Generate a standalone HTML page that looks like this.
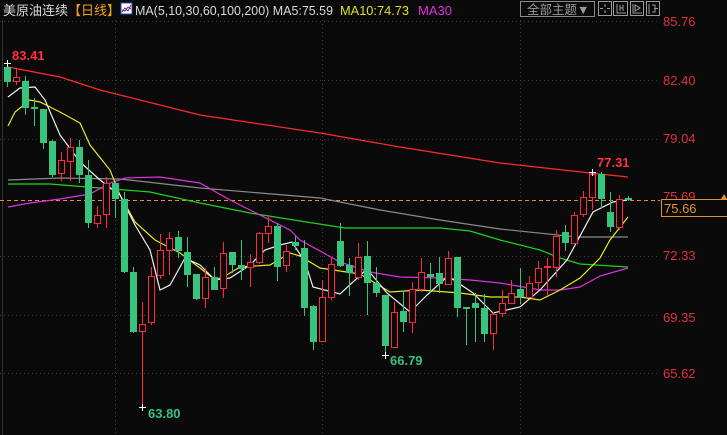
<!DOCTYPE html>
<html><head><meta charset="utf-8"><style>
html,body{margin:0;padding:0;background:#0a0a0a;width:727px;height:435px;overflow:hidden}
svg{display:block}
text{font-family:"Liberation Sans","Noto Sans CJK SC",sans-serif}
</style></head><body>
<svg width="727" height="435" viewBox="0 0 727 435" xmlns="http://www.w3.org/2000/svg">
<rect width="727" height="435" fill="#0a0a0a"/>
<!-- header -->
<text x="3" y="15" font-size="13" fill="#d8d8d8">美原油连续</text>
<text x="68" y="15" font-size="13" fill="#f0a020">【日线】</text>
<rect x="121" y="3" width="11" height="11" fill="#fff" stroke="#2050c0"/>
<polyline points="122,12 125,8 128,11 131,5" fill="none" stroke="#d02020" stroke-width="1"/>
<polyline points="122,10 125,11 128,7 131,9" fill="none" stroke="#2040c0" stroke-width="1"/>
<text x="135" y="15" font-size="13" fill="#d8d8d8" textLength="198" lengthAdjust="spacingAndGlyphs">MA(5,10,30,60,100,200) MA5:75.59</text>
<text x="340" y="15" font-size="13" fill="#e0e020" textLength="69" lengthAdjust="spacingAndGlyphs">MA10:74.73</text>
<text x="418" y="15" font-size="13" fill="#e030e0">MA30</text>
<rect x="520.5" y="1.5" width="74" height="15" fill="none" stroke="#8a8a8a"/>
<text x="527" y="14" font-size="12.5" fill="#9a9a9a">全部主题▼</text>
<g fill="none" stroke="#9a9a9a">
<rect x="598.5" y="1.5" width="13" height="14"/><rect x="613.5" y="1.5" width="14" height="14"/>
<rect x="630.5" y="1.5" width="13" height="14"/><rect x="646.5" y="1.5" width="13" height="14"/>
<path d="M605 4v3M605 10v3M600 8.5h3M607 8.5h3"/>
<path d="M617 4v9h9M620 5v6M623 5v6M620 8h3"/>
<path d="M633 4v9h9M635 5v6l5-3z"/>
<path d="M649 4v10M652 5h3v7h-3M654 8.5h4"/>
</g>
<!-- grid -->
<g stroke="#3a3a3a" stroke-dasharray="1,3">
<path d="M0 21.5H660M0 80.5H660M0 139.5H660M0 256.5H660M0 315.5H660M0 373.5H660"/>
<path d="M115.5 20V435M322.5 20V435M520.5 20V435"/>
</g>
<line x1="2.5" y1="20" x2="2.5" y2="435" stroke="#333"/>
<line x1="0" y1="200.5" x2="660" y2="200.5" stroke="#e09030" stroke-dasharray="4,3"/>
<!-- axis labels -->
<g font-size="13" fill="#e03040">
<text x="663" y="26">85.76</text><text x="663" y="85">82.40</text><text x="663" y="143">79.04</text>
<text x="663" y="201">75.69</text><text x="663" y="260">72.33</text><text x="663" y="322">69.35</text><text x="663" y="378">65.62</text>
</g>
<rect x="661.5" y="199.5" width="66" height="17" fill="#0a0a0a" stroke="#e09030"/>
<text x="664" y="213" font-size="13" fill="#e09030">75.66</text>
<path d="M721 199l3-5 3 5z" fill="#e09030"/>
<!-- MAs -->
<g fill="none" stroke-width="1.2">
<polyline stroke="#ff2a2a" points="8,67 60,77 100,90 200,115 320,133 400,147 500,163 590,173 628,177"/>
<polyline stroke="#8a8a8a" points="8,180 60,178 120,179 200,188 320,198 380,210 440,220 500,229 577,237 628,237"/>
<polyline stroke="#20d020" points="8,184 50,184 100,188 150,192 200,203 250,213 300,221 345,228 440,228 470,231 500,240 540,250 560,258 580,264 628,267"/>
<polyline stroke="#e030e0" points="8,207 30,203 60,199 90,194 110,183 125,178 160,177 200,183 230,200 260,215 290,230 300,240 340,262 370,272 400,277 440,278 470,280 500,283 540,290 560,290 580,287 600,276 628,268"/>
<polyline stroke="#e8e820" points="8,126 15,112 30,100 40,102 60,112 80,123 90,145 110,170 120,195 135,222 155,240 180,253 200,268 215,280 225,276 240,267 270,265 290,253 300,256 320,268 360,274 390,292 420,290 460,293 490,297 520,297 540,300 560,290 580,278 600,258 610,240 628,217"/>
<polyline stroke="#f0f0f0" points="8,97 20,88 35,87 45,100 60,135 80,162 100,180 120,195 135,225 150,250 160,290 170,285 185,258 200,265 215,280 230,278 250,265 265,250 280,245 292,242 305,262 313,287 340,294 367,269 387,293 410,312 427,295 448,276 473,293 493,313 520,307 540,290 567,260 593,212 613,202 627,200"/>
</g>
<!-- candles -->
<g id="c" stroke-width="1">
<g stroke="#38c47c" fill="#38c47c">
<line x1="7.5" y1="63" x2="7.5" y2="87"/><rect x="4" y="67" width="7" height="15" stroke="none"/>
<line x1="25.5" y1="76" x2="25.5" y2="115"/><rect x="22" y="81" width="7" height="27" stroke="none"/>
<line x1="34.5" y1="98" x2="34.5" y2="126"/><rect x="31" y="107" width="7" height="2" stroke="none"/>
<line x1="43.5" y1="109" x2="43.5" y2="149"/><rect x="40" y="109" width="7" height="34" stroke="none"/>
<line x1="52.5" y1="140" x2="52.5" y2="177"/><rect x="49" y="141" width="7" height="34" stroke="none"/>
<line x1="79.5" y1="140" x2="79.5" y2="183"/><rect x="76" y="147" width="7" height="28" stroke="none"/>
<line x1="88.5" y1="160" x2="88.5" y2="228"/><rect x="85" y="175" width="7" height="48" stroke="none"/>
<line x1="115.5" y1="182" x2="115.5" y2="218"/><rect x="112" y="183" width="7" height="16" stroke="none"/>
<line x1="124.5" y1="192" x2="124.5" y2="273"/><rect x="121" y="199" width="7" height="73" stroke="none"/>
<line x1="133.5" y1="267" x2="133.5" y2="333"/><rect x="130" y="272" width="7" height="60" stroke="none"/>
<line x1="178.5" y1="231" x2="178.5" y2="258"/><rect x="175" y="237" width="7" height="14" stroke="none"/>
<line x1="187.5" y1="237" x2="187.5" y2="287"/><rect x="184" y="252" width="7" height="23" stroke="none"/>
<line x1="196.5" y1="274" x2="196.5" y2="300"/><rect x="193" y="274" width="7" height="25" stroke="none"/>
<line x1="214.5" y1="267" x2="214.5" y2="290"/><rect x="211" y="277" width="7" height="13" stroke="none"/>
<line x1="232.5" y1="252" x2="232.5" y2="273"/><rect x="229" y="252" width="7" height="13" stroke="none"/>
<line x1="241.5" y1="240" x2="241.5" y2="280"/><rect x="238" y="265" width="7" height="4" stroke="none"/>
<line x1="277.5" y1="223" x2="277.5" y2="281"/><rect x="274" y="226" width="7" height="41" stroke="none"/>
<line x1="295.5" y1="236" x2="295.5" y2="250"/><rect x="292" y="242" width="7" height="4" stroke="none"/>
<line x1="304.5" y1="240" x2="304.5" y2="316"/><rect x="301" y="248" width="7" height="60" stroke="none"/>
<line x1="313.5" y1="305" x2="313.5" y2="350"/><rect x="310" y="306" width="7" height="36" stroke="none"/>
<line x1="340.5" y1="223" x2="340.5" y2="267"/><rect x="337" y="241" width="7" height="25" stroke="none"/>
<line x1="349.5" y1="258" x2="349.5" y2="296"/><rect x="346" y="265" width="7" height="8" stroke="none"/>
<line x1="367.5" y1="241" x2="367.5" y2="315"/><rect x="364" y="256" width="7" height="27" stroke="none"/>
<line x1="376.5" y1="267" x2="376.5" y2="297"/><rect x="373" y="283" width="7" height="10" stroke="none"/>
<line x1="385.5" y1="295" x2="385.5" y2="355"/><rect x="382" y="295" width="7" height="51" stroke="none"/>
<line x1="403.5" y1="291" x2="403.5" y2="332"/><rect x="400" y="311" width="7" height="11" stroke="none"/>
<line x1="430.5" y1="263" x2="430.5" y2="293"/><rect x="427" y="274" width="7" height="3" stroke="none"/>
<line x1="439.5" y1="257" x2="439.5" y2="293"/><rect x="436" y="273" width="7" height="11" stroke="none"/>
<line x1="457.5" y1="257" x2="457.5" y2="317"/><rect x="454" y="257" width="7" height="51" stroke="none"/>
<line x1="466.5" y1="307" x2="466.5" y2="345"/><rect x="463" y="307" width="7" height="2" stroke="none"/>
<line x1="475.5" y1="293" x2="475.5" y2="342"/><rect x="472" y="303" width="7" height="5" stroke="none"/>
<line x1="484.5" y1="294" x2="484.5" y2="342"/><rect x="481" y="308" width="7" height="26" stroke="none"/>
<line x1="520.5" y1="268" x2="520.5" y2="304"/><rect x="517" y="289" width="7" height="8" stroke="none"/>
<line x1="565.5" y1="225" x2="565.5" y2="251"/><rect x="562" y="232" width="7" height="11" stroke="none"/>
<line x1="601.5" y1="172" x2="601.5" y2="208"/><rect x="598" y="174" width="7" height="25" stroke="none"/>
<line x1="610.5" y1="192" x2="610.5" y2="232"/><rect x="607" y="212" width="7" height="15" stroke="none"/>
<line x1="628.5" y1="196" x2="628.5" y2="201"/><rect x="625" y="198" width="7" height="2" stroke="none"/>
</g>
<g stroke="#ff2a40" fill="#0a0a0a">
<line x1="16.5" y1="69" x2="16.5" y2="85"/><rect x="13.5" y="77.5" width="6" height="4"/>
<line x1="61.5" y1="152" x2="61.5" y2="181"/><rect x="58.5" y="160.5" width="6" height="13"/>
<line x1="70.5" y1="138" x2="70.5" y2="181"/><rect x="67.5" y="147.5" width="6" height="14"/>
<line x1="97.5" y1="206" x2="97.5" y2="228"/><rect x="94.5" y="215.5" width="6" height="8"/>
<line x1="106.5" y1="177" x2="106.5" y2="228"/><rect x="103.5" y="183.5" width="6" height="31"/>
<line x1="142.5" y1="302" x2="142.5" y2="407"/><rect x="139.5" y="324.5" width="6" height="7"/>
<line x1="151.5" y1="267" x2="151.5" y2="325"/><rect x="148.5" y="276.5" width="6" height="46"/>
<line x1="160.5" y1="234" x2="160.5" y2="279"/><rect x="157.5" y="250.5" width="6" height="25"/>
<line x1="169.5" y1="232" x2="169.5" y2="275"/><rect x="166.5" y="238.5" width="6" height="12"/>
<line x1="205.5" y1="268" x2="205.5" y2="308"/><rect x="202.5" y="277.5" width="6" height="21"/>
<line x1="223.5" y1="242" x2="223.5" y2="298"/><rect x="220.5" y="253.5" width="6" height="35"/>
<line x1="250.5" y1="254" x2="250.5" y2="287"/><rect x="247.5" y="262.5" width="6" height="5"/>
<line x1="259.5" y1="232" x2="259.5" y2="264"/><rect x="256.5" y="233.5" width="6" height="29"/>
<line x1="268.5" y1="216" x2="268.5" y2="243"/><rect x="265.5" y="226.5" width="6" height="7"/>
<line x1="286.5" y1="245" x2="286.5" y2="272"/><rect x="283.5" y="251.5" width="6" height="14"/>
<line x1="322.5" y1="280" x2="322.5" y2="342"/><rect x="319.5" y="297.5" width="6" height="44"/>
<line x1="331.5" y1="258" x2="331.5" y2="300"/><rect x="328.5" y="264.5" width="6" height="33"/>
<line x1="358.5" y1="243" x2="358.5" y2="280"/><rect x="355.5" y="257.5" width="6" height="20"/>
<line x1="394.5" y1="302" x2="394.5" y2="347"/><rect x="391.5" y="312.5" width="6" height="35"/>
<line x1="412.5" y1="282" x2="412.5" y2="333"/><rect x="409.5" y="289.5" width="6" height="33"/>
<line x1="421.5" y1="258" x2="421.5" y2="292"/><rect x="418.5" y="272.5" width="6" height="17"/>
<line x1="448.5" y1="251" x2="448.5" y2="284"/><rect x="445.5" y="258.5" width="6" height="26"/>
<line x1="493.5" y1="312" x2="493.5" y2="350"/><rect x="490.5" y="314.5" width="6" height="19"/>
<line x1="502.5" y1="290" x2="502.5" y2="317"/><rect x="499.5" y="303.5" width="6" height="10"/>
<line x1="511.5" y1="280" x2="511.5" y2="303"/><rect x="508.5" y="293.5" width="6" height="10"/>
<line x1="529.5" y1="276" x2="529.5" y2="297"/><rect x="526.5" y="283.5" width="6" height="14"/>
<line x1="538.5" y1="261" x2="538.5" y2="290"/><rect x="535.5" y="268.5" width="6" height="14"/>
<line x1="547.5" y1="258" x2="547.5" y2="296"/><rect x="544" y="266" width="7" height="2" fill="#ff2a40" stroke="none"/>
<line x1="556.5" y1="230" x2="556.5" y2="277"/><rect x="553.5" y="236.5" width="6" height="31"/>
<line x1="574.5" y1="212" x2="574.5" y2="243"/><rect x="571.5" y="215.5" width="6" height="28"/>
<line x1="583.5" y1="191" x2="583.5" y2="217"/><rect x="580.5" y="197.5" width="6" height="17"/>
<line x1="592.5" y1="172" x2="592.5" y2="210"/><rect x="589.5" y="174.5" width="6" height="23"/>
<line x1="619.5" y1="195" x2="619.5" y2="230"/><rect x="616.5" y="199.5" width="6" height="28"/>
</g>
</g>
<!-- extreme labels -->
<g stroke="#fff"><path d="M4 63.5h7M7.5 60v7"/><path d="M139 407.5h7M142.5 404v7"/><path d="M382 355.5h7M385.5 352v7"/><path d="M589 172.5h7M592.5 169v7"/></g>
<text x="12" y="60" font-size="13" font-weight="bold" fill="#ff3040">83.41</text>
<text x="148" y="418" font-size="13" font-weight="bold" fill="#38c47c">63.80</text>
<text x="390" y="365" font-size="13" font-weight="bold" fill="#38c47c">66.79</text>
<text x="597" y="167" font-size="13" font-weight="bold" fill="#ff3040">77.31</text>
</svg>
</body></html>
